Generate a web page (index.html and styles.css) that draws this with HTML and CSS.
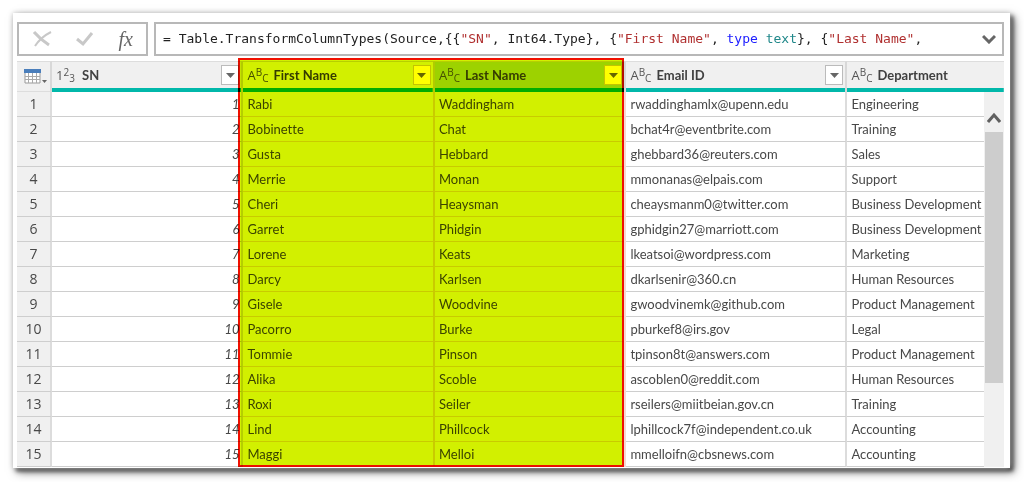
FILE: index.html
```html
<!DOCTYPE html>
<html lang="en">
<head>
<meta charset="utf-8">
<title>Query editor</title>
<link rel="stylesheet" href="styles.css">
</head>
<body>
<main class="window">
  <div class="bar">
    <div class="actions">
      <button class="tool" aria-label="Cancel"><svg width="20" height="18" viewBox="0 0 20 18"><path d="M2 2Q8 9 17 15" fill="none" stroke="#c8c8c8" stroke-width="3"/><path d="M19 2Q9 7 3 16" fill="none" stroke="#c8c8c8" stroke-width="2"/></svg></button>
      <button class="tool" aria-label="Commit"><svg width="18" height="16" viewBox="0 0 18 16"><path d="M1 8l6 5L16 2" fill="none" stroke="#c8c8c8" stroke-width="3"/></svg></button>
      <button class="tool fx" aria-label="Insert function">fx</button>
    </div>
    <div class="formula">
      <code class="code" role="textbox" aria-label="Formula" contenteditable="true" spellcheck="false">= Table.TransformColumnTypes(Source,{{<span class="str">"SN"</span>, Int64.Type}, {<span class="str">"First Name"</span>, <span class="kw">type</span> <span class="ty">text</span>}, {<span class="str">"Last Name"</span>,</code>
      <button class="expand" aria-label="Expand formula bar"><svg width="14" height="10" viewBox="0 0 14 10"><path d="M1 2l6 6 6-6" fill="none" stroke="#666" stroke-width="3"/></svg></button>
    </div>
  </div>
  <div class="grid">
    <table class="data">
      <colgroup><col class="c-num"><col class="c-sn"><col class="c-first"><col class="c-last"><col class="c-mail"><col></colgroup>
      <thead>
        <tr>
          <th><button class="corner" aria-label="Table options"><svg width="24" height="16" viewBox="0 0 24 16"><path d="M1 1h15v13H1z" fill="#fff" stroke="#999"/><path d="M1 7.500h15M1 10.500h15M4.500 4v10M8.500 4v10M12.500 4v10" stroke="#aaa"/><path d="M0 0h17v4H0z" fill="#4a7ebb"/><path d="M18 11h5l-2.500 3z" fill="#666"/></svg></button></th>
          <th><div class="head"><span class="kind digits">1<sup>2</sup><sub>3</sub></span><span class="name">SN</span><button class="filter" aria-label="Filter SN"><svg width="9" height="5"><path d="M0 0h9L4.500 5z" fill="#666"/></svg></button></div></th>
          <th class="plain"><div class="head"><span class="kind">A<sup>B</sup><sub>C</sub></span><span class="name">First Name</span><button class="filter lit" aria-label="Filter First Name"><svg width="9" height="5"><path d="M0 0h9L4.500 5z" fill="#666600"/></svg></button></div></th>
          <th class="picked"><div class="head"><span class="kind">A<sup>B</sup><sub>C</sub></span><span class="name">Last Name</span><button class="filter lit" aria-label="Filter Last Name"><svg width="9" height="5"><path d="M0 0h9L4.500 5z" fill="#666600"/></svg></button></div></th>
          <th><div class="head"><span class="kind">A<sup>B</sup><sub>C</sub></span><span class="name">Email ID</span><button class="filter" aria-label="Filter Email ID"><svg width="9" height="5"><path d="M0 0h9L4.500 5z" fill="#666"/></svg></button></div></th>
          <th><div class="head"><span class="kind">A<sup>B</sup><sub>C</sub></span><span class="name">Department</span></div></th>
        </tr>
      </thead>
      <tbody>
        <tr><th>1</th><td>1</td><td>Rabi</td><td>Waddingham</td><td>rwaddinghamlx@upenn.edu</td><td>Engineering</td></tr>
        <tr><th>2</th><td>2</td><td>Bobinette</td><td>Chat</td><td>bchat4r@eventbrite.com</td><td>Training</td></tr>
        <tr><th>3</th><td>3</td><td>Gusta</td><td>Hebbard</td><td>ghebbard36@reuters.com</td><td>Sales</td></tr>
        <tr><th>4</th><td>4</td><td>Merrie</td><td>Monan</td><td>mmonanas@elpais.com</td><td>Support</td></tr>
        <tr><th>5</th><td>5</td><td>Cheri</td><td>Heaysman</td><td>cheaysmanm0@twitter.com</td><td>Business Development</td></tr>
        <tr><th>6</th><td>6</td><td>Garret</td><td>Phidgin</td><td>gphidgin27@marriott.com</td><td>Business Development</td></tr>
        <tr><th>7</th><td>7</td><td>Lorene</td><td>Keats</td><td>lkeatsoi@wordpress.com</td><td>Marketing</td></tr>
        <tr><th>8</th><td>8</td><td>Darcy</td><td>Karlsen</td><td>dkarlsenir@360.cn</td><td>Human Resources</td></tr>
        <tr><th>9</th><td>9</td><td>Gisele</td><td>Woodvine</td><td>gwoodvinemk@github.com</td><td>Product Management</td></tr>
        <tr><th>10</th><td>10</td><td>Pacorro</td><td>Burke</td><td>pburkef8@irs.gov</td><td>Legal</td></tr>
        <tr><th>11</th><td>11</td><td>Tommie</td><td>Pinson</td><td>tpinson8t@answers.com</td><td>Product Management</td></tr>
        <tr><th>12</th><td>12</td><td>Alika</td><td>Scoble</td><td>ascoblen0@reddit.com</td><td>Human Resources</td></tr>
        <tr><th>13</th><td>13</td><td>Roxi</td><td>Seiler</td><td>rseilers@miitbeian.gov.cn</td><td>Training</td></tr>
        <tr><th>14</th><td>14</td><td>Lind</td><td>Phillcock</td><td>lphillcock7f@independent.co.uk</td><td>Accounting</td></tr>
        <tr><th>15</th><td>15</td><td>Maggi</td><td>Melloi</td><td>mmelloifn@cbsnews.com</td><td>Accounting</td></tr>
      </tbody>
    </table>
    <div class="marker"></div>
    <div class="scroll">
      <button class="up" aria-label="Scroll up"><svg width="14" height="12" viewBox="0 0 14 12"><path d="M1 10l6-7 6 7" fill="none" stroke="#606060" stroke-width="3"/></svg></button>
      <div class="thumb"></div>
    </div>
  </div>
</main>
</body>
</html>
```
FILE: styles.css
```css
* { box-sizing: border-box; }
body { margin: 0; padding: 13px 14px 14px 13px; background: #fff; color: #484848; font: 13px/20px Lato, "Noto Sans", sans-serif; font-variant-ligatures: none; }
button { border: 0; padding: 0; margin: 0; background: none; color: inherit; font: inherit; display: flex; align-items: center; justify-content: center; }
.window { background: #fff; padding: 9px 6px 1px 4px; box-shadow: 0 0 5px #ccc, 3px 3px 4px #333, 4px 4px 9px #777; }
.bar { display: flex; gap: 6px; height: 34px; margin-bottom: 5px; }
.actions { display: flex; align-items: center; justify-content: space-between; width: 131px; padding: 0 13px; border: 2px solid #b8b8b8; }
.tool { height: 26px; }
.fx { font: italic 20px/24px "Liberation Serif", serif; color: #666; }
.formula { flex: 1; min-width: 0; display: flex; align-items: center; border: 2px solid #b8b8b8; padding-left: 7px; }
.code { flex: 1; min-width: 0; overflow: hidden; white-space: nowrap; color: #222; font: 13px/20px "DejaVu Sans Mono", "Liberation Mono", monospace; outline: 0; }
.str { color: #b03030; }
.kw { color: #2020ff; }
.ty { color: #20888a; }
.expand { width: 26px; height: 28px; }
.grid { position: relative; }
.data { width: 100%; table-layout: fixed; border-collapse: separate; border-spacing: 0; }
.c-num { width: 35px; }
.c-sn { width: 19.4%; }
.c-first { width: 19.4%; }
.c-last { width: 19.4%; }
.c-mail { width: 22.4%; }
th, td { padding: 0 4px; overflow: hidden; white-space: nowrap; text-align: left; }
thead th { height: 31px; padding-bottom: 4px; background: linear-gradient(#01b8aa, #01b8aa) bottom / 100% 4px no-repeat #f0f0f0; border-top: 1px solid #ddd; border-right: 2px solid #d8d8d8; }
thead th:last-child { border-right: 0; }
thead th:first-child { background: #f0f0f0; border-bottom: 1px solid #ddd; padding: 0 2px 0 7px; }
thead .plain { background-color: #fff; }
thead .picked { background-color: #bfe0dd; }
.head { display: flex; align-items: center; height: 26px; }
.kind { width: 18px; margin-right: 8px; flex: none; font: 13px/18px "Open Sans", sans-serif; color: #555; }
.kind sup, .kind sub { font-size: 10px; line-height: 0; vertical-align: 4px; }
.kind sub { vertical-align: -2px; }
.kind.digits { width: 18px; }
.name { flex: 1; color: #404040; }
.filter { width: 18px; height: 20px; border: 1px solid #bbb; background: #fff; flex: none; margin-right: -2px; }
.lit { position: relative; z-index: 2; background: #ff0; border-color: #c4c400; }
tbody td, tbody th { height: 25px; line-height: 20px; border-bottom: 1px solid #cecece; border-right: 2px solid #dcdcdc; }
tbody td:nth-child(3), tbody td:nth-child(4) { border-color: #f5d8d0; }
tbody td:last-child { border-right: 0; }
tbody th { background: #f0f0f0; font: 14px/20px "Open Sans", sans-serif; text-align: center; padding: 0; }
tbody td:nth-child(2) { text-align: right; font-style: italic; padding-right: 2px; }
.marker { position: absolute; top: -3px; bottom: 0; left: 22.4%; width: 39.1%; background: #d2f000; border: 2px solid #f01000; mix-blend-mode: multiply; pointer-events: none; }
.scroll { position: absolute; top: 31px; right: 0; bottom: 0; width: 20px; background: #f0f0f0; }
.up { width: 20px; height: 40px; padding-top: 12px; }
.thumb { width: 18px; height: 67%; margin-left: 1px; background: #cdcdcd; }
```
